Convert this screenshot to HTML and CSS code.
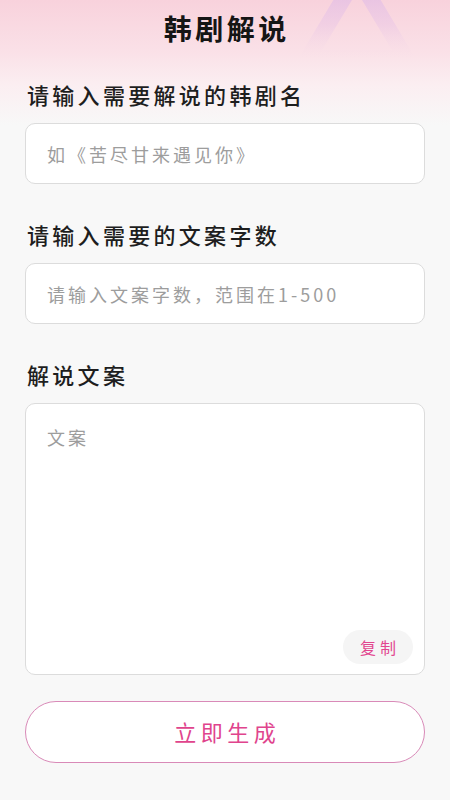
FILE: index.html
```html
<!DOCTYPE html>
<html lang="zh">
<head>
<meta charset="utf-8">
<meta name="viewport" content="width=450">
<title>韩剧解说</title>
<link rel="stylesheet" href="styles.css">
</head>
<body>
<div class="page">
  <svg class="deco" width="130" height="70" viewBox="0 0 130 70" aria-hidden="true">
    <defs>
      <linearGradient id="fade" x1="0" y1="0" x2="0" y2="1">
        <stop offset="0" stop-color="#d9b4e8" stop-opacity="0.75"/>
        <stop offset="0.6" stop-color="#e8c4e6" stop-opacity="0.45"/>
        <stop offset="1" stop-color="#f6dde8" stop-opacity="0"/>
      </linearGradient>
    </defs>
    <polygon points="65,-24 16,58 114,58" fill="none" stroke="url(#fade)" stroke-width="16" stroke-linejoin="miter"/>
  </svg>
  <header class="header">
    <h1 class="title">韩剧解说</h1>
  </header>
  <main class="form">
    <div class="label">请输入需要解说的韩剧名</div>
    <input class="field" type="text" placeholder="如《苦尽甘来遇见你》">
    <div class="label">请输入需要的文案字数</div>
    <input class="field" type="text" placeholder="请输入文案字数，范围在1-500">
    <div class="label">解说文案</div>
    <div class="area-wrap">
      <textarea class="area" placeholder="文案"></textarea>
      <button class="copy" type="button">复制</button>
    </div>
    <button class="generate" type="button">立即生成</button>
  </main>
</div>
</body>
</html>
```
FILE: styles.css
```css
* { box-sizing: border-box; }
html, body { margin: 0; padding: 0; }
body {
  width: 450px;
  min-height: 800px;
  background: #f8f8f8;
  font-family: "Noto Sans CJK SC", "Noto Sans", sans-serif;
  color: #1e1e1e;
}
.page {
  position: relative;
  min-height: 800px;
  background: linear-gradient(180deg, #f8d2dc 0px, #fae0e7 50px, #fbeef1 85px, #f8f8f8 125px) no-repeat;
  background-size: 100% 130px;
  overflow: hidden;
}
.deco {
  position: absolute;
  left: 292px;
  top: 0;
}
.header {
  position: relative;
  height: 56px;
  display: flex;
  align-items: center;
  justify-content: center;
}
.title {
  margin: 0;
  font-size: 28px;
  line-height: 54px;
  font-weight: 700;
  letter-spacing: 3.5px;
  padding-left: 3.5px;
  color: #151515;
}
.form {
  position: relative;
  padding: 0 25px;
  display: flex;
  flex-direction: column;
}
.label {
  font-size: 22px;
  line-height: 30px;
  letter-spacing: 3.3px;
  font-weight: 500;
  color: #1e1e1e;
  margin-top: 35px;
  margin-bottom: 14px;
  padding-left: 2px;
}
.label:first-child { margin-top: 23px; }
.field {
  display: block;
  width: 400px;
  height: 61px;
  border: 1px solid #dcdcdc;
  border-radius: 10px;
  background: #fff;
  padding: 0 20px 0 21px;
  font-family: inherit;
  font-size: 18px;
  letter-spacing: 3px;
  color: #333;
  outline: none;
}
.field::placeholder, .area::placeholder { color: #9d9d9d; }
.area-wrap {
  position: relative;
  width: 400px;
  height: 272px;
}
.area {
  display: block;
  width: 100%;
  height: 100%;
  border: 1px solid #dcdcdc;
  border-radius: 10px;
  background: #fff;
  padding: 18px 21px;
  font-family: inherit;
  font-size: 18px;
  line-height: 30px;
  letter-spacing: 3px;
  color: #333;
  resize: none;
  outline: none;
}
.copy {
  position: absolute;
  right: 12px;
  bottom: 11px;
  width: 70px;
  height: 34px;
  border: none;
  border-radius: 17px;
  background: #f5f5f5;
  color: #e2468f;
  font-family: inherit;
  font-size: 16px;
  letter-spacing: 4px;
  padding: 0 0 0 4px;
}
.generate {
  margin-top: 26px;
  width: 400px;
  height: 62px;
  border: 1px solid #d98ab8;
  border-radius: 31px;
  background: #fff;
  color: #e0448d;
  font-family: inherit;
  font-size: 22px;
  letter-spacing: 4.5px;
  padding: 0 0 2px 4.5px;
}
```
